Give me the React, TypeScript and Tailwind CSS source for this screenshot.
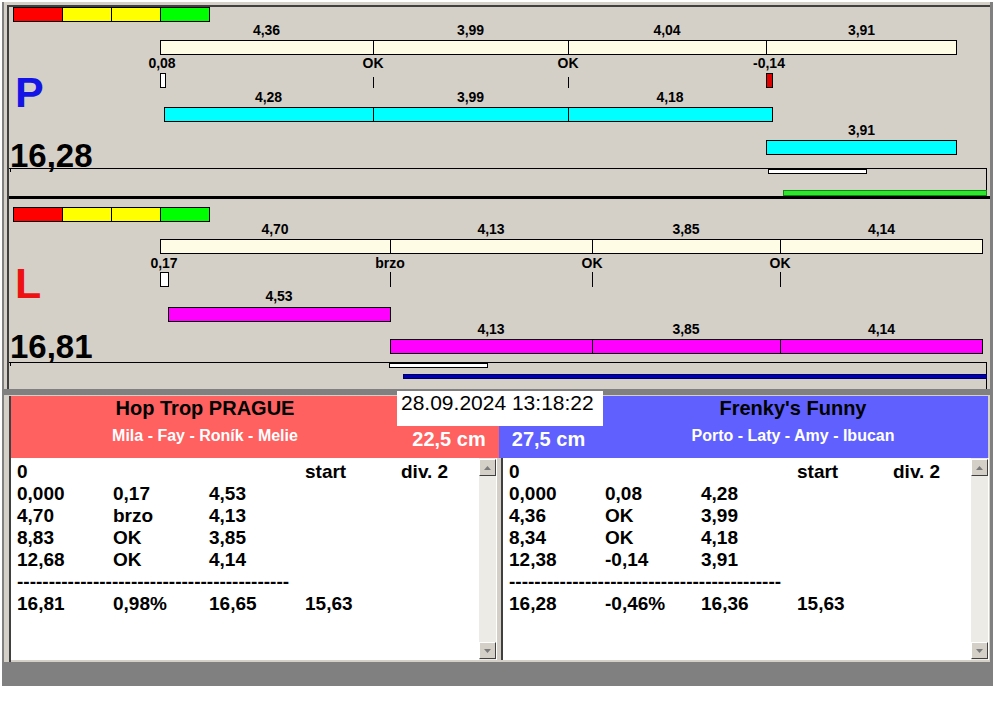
import React from "react";

const FONT = "'Liberation Sans', Arial, sans-serif";

type BarDef = { x1: number; x2: number; y1: number; y2: number; fill: string; stroke?: string; div?: number[] };
type LabelDef = { x: number; y: number; t: string };

function Bar({ b }: { b: BarDef }) {
  return (
    <g>
      <rect x={b.x1 + 0.5} y={b.y1 + 0.5} width={b.x2 - b.x1 - 1} height={b.y2 - b.y1 - 1} fill={b.fill} stroke={b.stroke ?? "#000"} />
      {(b.div ?? []).map((d) => (
        <line key={d} x1={d + 0.5} x2={d + 0.5} y1={b.y1} y2={b.y2} stroke="#000" />
      ))}
    </g>
  );
}

function Scale({ y }: { y: number }) {
  const colors = ["#ff0000", "#ffff00", "#ffff00", "#00ff00"];
  return (
    <g>
      {colors.map((c, i) => (
        <rect key={i} x={13 + 49 * i + 0.5} y={y + 0.5} width={49} height={14} fill={c} stroke="#000" />
      ))}
    </g>
  );
}

function Labels({ items }: { items: LabelDef[] }) {
  return (
    <g fontSize={14} fontWeight="bold" fill="#000" textAnchor="middle">
      {items.map((l, i) => (
        <text key={i} x={l.x} y={l.y}>{l.t}</text>
      ))}
    </g>
  );
}

function Panel({ y0, h, children }: { y0: number; h: number; children: React.ReactNode }) {
  return (
    <svg width={981} height={h} viewBox={`9 ${y0} 981 ${h}`} className="block" shapeRendering="crispEdges" fontFamily={FONT}>
      {children}
    </svg>
  );
}

function PanelP() {
  return (
    <Panel y0={7} h={189}>
      <Scale y={7} />
      <Labels items={[
        { x: 266.5, y: 35, t: "4,36" }, { x: 470.5, y: 35, t: "3,99" }, { x: 667, y: 35, t: "4,04" }, { x: 861.5, y: 35, t: "3,91" },
      ]} />
      <Bar b={{ x1: 160, x2: 957, y1: 40, y2: 55, fill: "#fffce6", div: [373, 568, 766] }} />
      <Labels items={[
        { x: 162, y: 68, t: "0,08" }, { x: 373, y: 68, t: "OK" }, { x: 568, y: 68, t: "OK" }, { x: 769, y: 68, t: "-0,14" },
      ]} />
      <Bar b={{ x1: 160, x2: 166, y1: 73, y2: 88, fill: "#ffffff" }} />
      <line x1={373.5} x2={373.5} y1={77} y2={88} stroke="#000" />
      <line x1={568.5} x2={568.5} y1={77} y2={88} stroke="#000" />
      <Bar b={{ x1: 766, x2: 773, y1: 73, y2: 88, fill: "#e00000" }} />

      <text x={15} y={107} fontSize={43} fontWeight="bold" fill="#1414e6">P</text>

      <Labels items={[
        { x: 268.5, y: 102, t: "4,28" }, { x: 470.5, y: 102, t: "3,99" }, { x: 670, y: 102, t: "4,18" },
      ]} />
      <Bar b={{ x1: 164, x2: 773, y1: 107, y2: 122, fill: "#00ffff", div: [373, 568] }} />
      <Labels items={[{ x: 861.5, y: 135, t: "3,91" }]} />
      <Bar b={{ x1: 766, x2: 957, y1: 140, y2: 155, fill: "#00ffff" }} />

      <text x={10} y={167} fontSize={33} fontWeight="bold" fill="#000">16,28</text>
      <line x1={9} x2={987} y1={168.5} y2={168.5} stroke="#000" />
      <line x1={10.5} x2={10.5} y1={168} y2={172} stroke="#000" />
      <line x1={986.5} x2={986.5} y1={168} y2={193} stroke="#000" />
      <Bar b={{ x1: 768, x2: 867, y1: 169, y2: 174, fill: "#ffffff" }} />
      <Bar b={{ x1: 783, x2: 987, y1: 190, y2: 196, fill: "#2ee82e", stroke: "#118811" }} />
    </Panel>
  );
}

function PanelL() {
  return (
    <Panel y0={199} h={190}>
      <Scale y={207} />
      <Labels items={[
        { x: 275, y: 234, t: "4,70" }, { x: 491, y: 234, t: "4,13" }, { x: 686, y: 234, t: "3,85" }, { x: 881.5, y: 234, t: "4,14" },
      ]} />
      <Bar b={{ x1: 160, x2: 983, y1: 239, y2: 254, fill: "#fffce6", div: [390, 592, 780] }} />
      <Labels items={[
        { x: 164, y: 268, t: "0,17" }, { x: 390, y: 268, t: "brzo" }, { x: 592, y: 268, t: "OK" }, { x: 780, y: 268, t: "OK" },
      ]} />
      <Bar b={{ x1: 160, x2: 169, y1: 272, y2: 287, fill: "#ffffff" }} />
      <line x1={390.5} x2={390.5} y1={272} y2={287} stroke="#000" />
      <line x1={592.5} x2={592.5} y1={272} y2={287} stroke="#000" />
      <line x1={780.5} x2={780.5} y1={272} y2={287} stroke="#000" />

      <text x={15} y={298} fontSize={43} fontWeight="bold" fill="#ee1111">L</text>

      <Labels items={[{ x: 279, y: 301, t: "4,53" }]} />
      <Bar b={{ x1: 168, x2: 391, y1: 307, y2: 322, fill: "#ff00ff" }} />
      <Labels items={[
        { x: 491, y: 334, t: "4,13" }, { x: 686, y: 334, t: "3,85" }, { x: 881.5, y: 334, t: "4,14" },
      ]} />
      <Bar b={{ x1: 390, x2: 983, y1: 339, y2: 354, fill: "#ff00ff", div: [592, 780] }} />

      <text x={10} y={358} fontSize={33} fontWeight="bold" fill="#000">16,81</text>
      <line x1={9} x2={987} y1={362.5} y2={362.5} stroke="#000" />
      <line x1={10.5} x2={10.5} y1={362} y2={366} stroke="#000" />
      <line x1={986.5} x2={986.5} y1={362} y2={389} stroke="#000" />
      <Bar b={{ x1: 389, x2: 488, y1: 363, y2: 368, fill: "#ffffff" }} />
      <Bar b={{ x1: 403, x2: 987, y1: 374, y2: 379, fill: "#0000b0", stroke: "#000060" }} />
    </Panel>
  );
}

function ScrollBtn({ up }: { up?: boolean }) {
  return (
    <div className="w-[17px] h-[17px] bg-[#d4d0c8] border border-t-white border-l-white border-r-[#404040] border-b-[#404040] flex items-center justify-center">
      <svg width="7" height="4" viewBox="0 0 7 4">
        <polygon points={up ? "3.5,0 7,4 0,4" : "0,0 7,0 3.5,4"} fill="#7a7a7a" />
      </svg>
    </div>
  );
}

function List({ rows }: { rows: string[][] }) {
  const dashes = "-".repeat(43);
  return (
    <div className="h-[202px] w-[486px] flex bg-white pr-[1px]">
      <div className="flex-1 pt-[3px] pl-[6px] text-[19px] font-bold leading-[22px] text-black">
        {rows.map((r, i) =>
          r.length === 0 ? (
            <div key={i} className="h-[22px] whitespace-pre">{dashes}</div>
          ) : (
            <div key={i} className="h-[22px] flex whitespace-pre">
              {r.map((c, j) => (
                <div key={j} className={j < 4 ? "w-[96px]" : "flex-1"}>{c}</div>
              ))}
            </div>
          )
        )}
      </div>
      <div className="w-[17px] flex flex-col justify-between py-[1px] bg-[#ecebe6]">
        <ScrollBtn up />
        <ScrollBtn />
      </div>
    </div>
  );
}

const leftRows = [
  ["0", "", "", "start", "div. 2"],
  ["0,000", "0,17", "4,53"],
  ["4,70", "brzo", "4,13"],
  ["8,83", "OK", "3,85"],
  ["12,68", "OK", "4,14"],
  [],
  ["16,81", "0,98%", "16,65", "15,63"],
];

const rightRows = [
  ["0", "", "", "start", "div. 2"],
  ["0,000", "0,08", "4,28"],
  ["4,36", "OK", "3,99"],
  ["8,34", "OK", "4,18"],
  ["12,38", "-0,14", "3,91"],
  [],
  ["16,28", "-0,46%", "16,36", "15,63"],
];

export default function App() {
  return (
    <div className="relative w-[995px] h-[716px] bg-white pt-[2px] pl-[2px] overflow-hidden" style={{ fontFamily: FONT }}>
      <div className="w-[991px] h-[684px] bg-[#808080] pl-[2px] flex flex-col">
        {/* charts */}
        <div className="h-[387px] mr-[3px] bg-[#d4d0c8] pl-[3px] pt-[3px]">
          <div className="border-t-2 border-l-2 border-[#404040] bg-[#d4d0c8]">
            <PanelP />
            <div className="h-[3px] bg-black" />
            <PanelL />
          </div>
        </div>

        {/* teams */}
        <div className="h-[267px] mt-[6px] mr-[3px] bg-[#d4d0c8] pl-[5px] pt-[1px] flex">
          <div className="w-[490px] border-l-2 border-[#404040] flex flex-col">
            <div className="h-[62px] bg-[#ff6060] flex">
              <div className="w-[388px] text-center">
                <div className="text-[20px] leading-[24px] font-bold text-black">Hop Trop PRAGUE</div>
                <div className="mt-[6px] text-[16px] leading-[20px] font-bold text-white">Mila - Fay - Roník - Melie</div>
              </div>
              <div className="flex-1 text-center pt-[31px] text-[20px] leading-[24px] font-bold text-white">22,5 cm</div>
            </div>
            <List rows={leftRows} />
          </div>
          <div className="w-[489px] flex flex-col">
            <div className="h-[62px] bg-[#6060ff] flex">
              <div className="w-[99px] text-center pt-[31px] text-[20px] leading-[24px] font-bold text-white">27,5 cm</div>
              <div className="flex-1 text-center">
                <div className="text-[20px] leading-[24px] font-bold text-black">Frenky's Funny</div>
                <div className="mt-[6px] text-[16px] leading-[20px] font-bold text-white">Porto - Laty - Amy - Ibucan</div>
              </div>
            </div>
            <div className="ml-[2px] border-l-2 border-[#404040]">
              <List rows={rightRows} />
            </div>
          </div>
        </div>
      </div>

      <div className="absolute left-[397px] top-[391px] w-[206px] h-[35px] bg-white pl-[4px] text-[21px] leading-[24px] text-black">
        28.09.2024 13:18:22
      </div>
    </div>
  );
}
